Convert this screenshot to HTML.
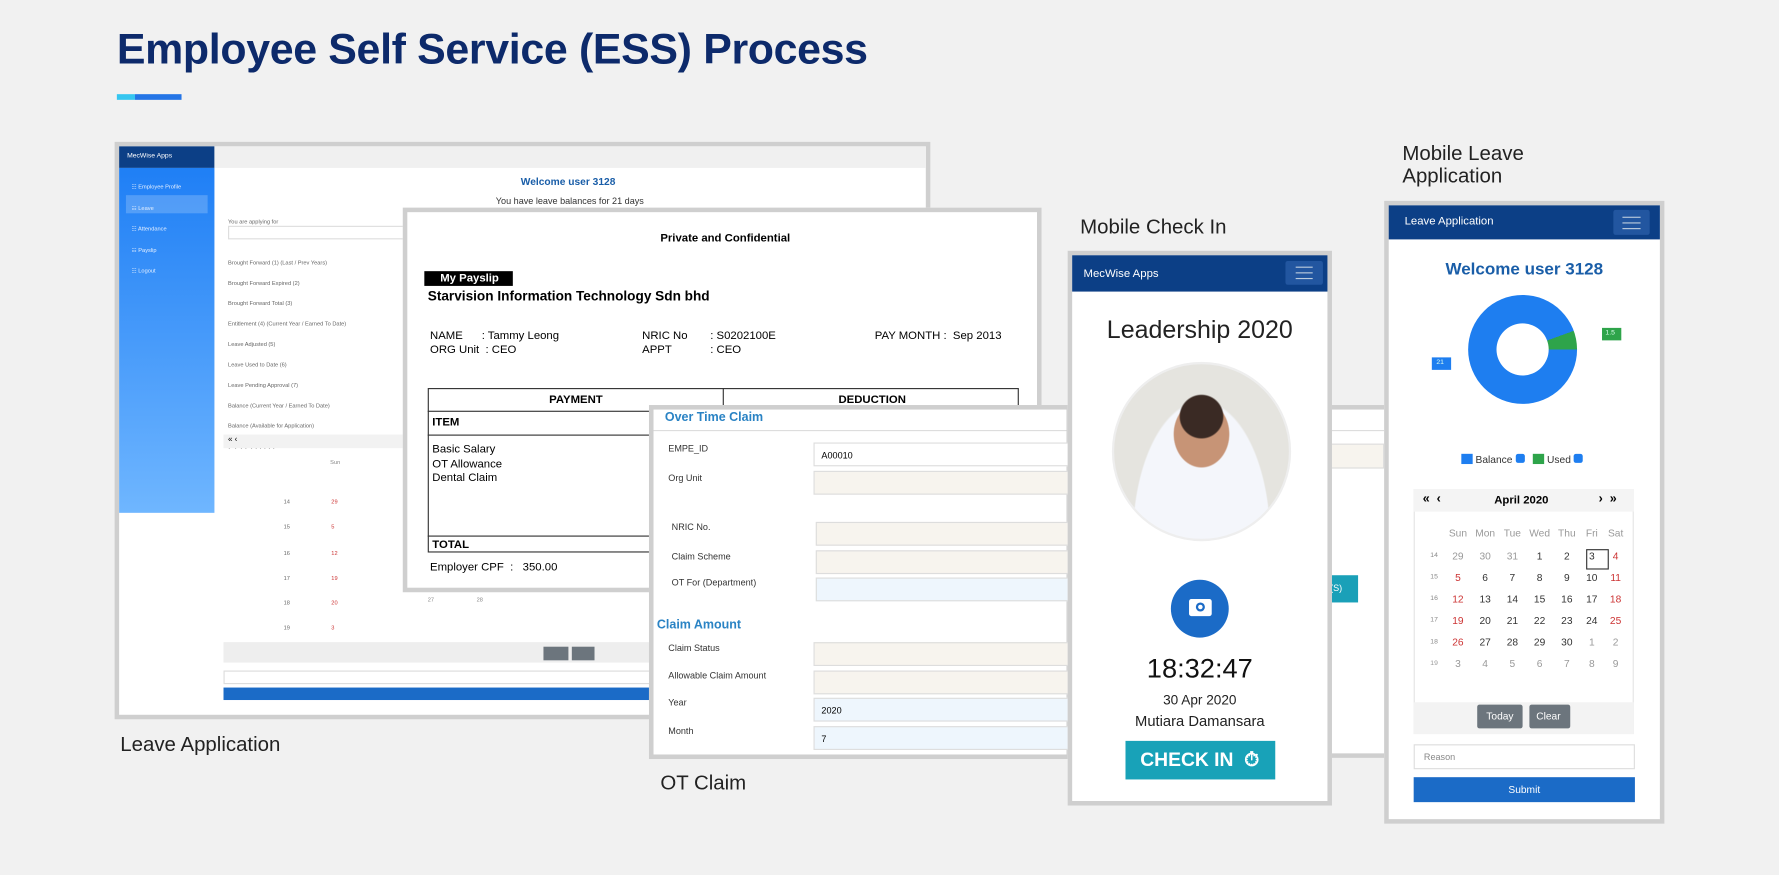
<!DOCTYPE html>
<html><head><meta charset="utf-8"><style>
*{box-sizing:border-box;margin:0;padding:0}
html,body{width:1779px;height:875px;overflow:hidden;background:#f1f1f1;font-family:"Liberation Sans",sans-serif}
#w{position:absolute;left:0;top:0;width:1568px;height:771px;transform:scale(1.13457);transform-origin:0 0}
.a{position:absolute}
.fr{position:absolute;border:4px solid #cfcfcf;background:#fff}
.lbl{position:absolute;font-size:18px;color:#222;line-height:21px}
.t{position:absolute;white-space:nowrap}
.inp{position:absolute;border:1px solid #ddd;background:#f7f4ee}
.inpb{position:absolute;border:1px solid #ddd;background:#eef6fd}
</style></head><body><div id="w">
<div class="t" style="left:103px;top:23px;font-size:37.8px;font-weight:bold;color:#0d2a6b;letter-spacing:-0.3px">Employee Self Service (ESS) Process</div>
<div class="a" style="left:103px;top:83px;width:16px;height:5px;background:#36c6f0"></div>
<div class="a" style="left:119px;top:83px;width:41px;height:5px;background:#2475e6"></div>

<!-- Leave application desktop -->
<div class="fr" style="left:101px;top:125px;width:719px;height:509px">
 <div class="a" style="left:0;top:0;width:84px;height:19px;background:#0c3f86;color:#fff;font-size:6px;padding:6px 7px">MecWise Apps</div>
 <div class="a" style="left:84px;top:0;right:0;height:19px;background:#f0f0f0"></div>
 <div class="a" style="left:0;top:19px;width:84px;height:304px;background:linear-gradient(#1f7ff5,#6fb6ff)"></div>
 <div class="a" style="left:6px;top:43px;width:72px;height:16px;background:rgba(255,255,255,.2)"></div>
 <div class="t" style="left:11px;top:27px;font-size:5px;color:#e6f0ff;line-height:18.5px">☷ Employee Profile<br>☷ Leave<br>☷ Attendance<br>☷ Payslip<br>☷ Logout</div>
 <div class="t" style="left:354px;top:26px;font-size:9px;font-weight:bold;color:#1a5ea8">Welcome user 3128</div>
 <div class="t" style="left:332px;top:44px;font-size:8px;color:#333">You have leave balances for 21 days</div>
 <div class="t" style="left:96px;top:58px;font-size:5px;color:#666;line-height:18px">You are applying for<br><br>Brought Forward (1) (Last / Prev Years)<br>Brought Forward Expired (2)<br>Brought Forward Total (3)<br>Entitlement (4) (Current Year / Earned To Date)<br>Leave Adjusted (5)<br>Leave Used to Date (6)<br>Leave Pending Approval (7)<br>Balance (Current Year / Earned To Date)<br>Balance (Available for Application)<br>(-3)+(4)+(5)-(6)-(7)</div>
 <div class="inp" style="left:96px;top:70px;width:160px;height:12px;background:#fff"></div>
 <div class="a" style="left:92px;top:254px;width:480px;height:12px;background:#f2f2f2"></div>
 <div class="t" style="left:96px;top:255px;font-size:7px">« ‹</div>
 <div class="t" style="left:186px;top:276px;font-size:5px;color:#888">Sun</div>
 <div class="t" style="left:145px;top:303px;font-size:5px;color:#666;line-height:22.3px">14<br>15<br>16<br>17<br>18<br>19</div>
 <div class="t" style="left:187px;top:303px;font-size:5px;color:#c33;line-height:22.3px">29<br>5<br>12<br>19<br>20<br>3</div>
 <div class="a" style="left:92px;top:437px;width:480px;height:18px;background:#eee"></div>
 <div class="a" style="left:374px;top:441px;width:22px;height:12px;background:#6c757d"></div>
 <div class="a" style="left:399px;top:441px;width:20px;height:12px;background:#6c757d"></div>
 <div class="inp" style="left:92px;top:462px;width:480px;height:12px;background:#fff"></div>
 <div class="a" style="left:92px;top:477px;width:480px;height:11px;background:#1b6bc7"></div>
</div>

<!-- behind panel -->
<div class="fr" style="left:940px;top:357px;width:284px;height:311px">
 <div class="a" style="left:0;top:18px;right:0;height:1px;background:#ddd"></div>
 <div class="inp" style="left:0;top:30px;right:0;height:22px"></div>
 <div class="a" style="left:221px;top:146px;width:32px;height:24px;background:#1aa0b8;color:#fff;font-size:8px;padding:7px 2px">E(S)</div>
</div>

<!-- Payslip -->
<div class="fr" style="left:355px;top:183px;width:563px;height:339px">
 <div class="t" style="left:223px;top:18px;font-size:10px;font-weight:bold">Private and Confidential</div>
 <div class="a" style="left:15px;top:52px;width:78px;height:13px;background:#000;color:#fff;font-size:10px;font-weight:bold;padding:1px 0 0 14px">My Payslip</div>
 <div class="t" style="left:18px;top:67px;font-size:12px;font-weight:bold">Starvision Information Technology Sdn bhd</div>
 <div class="t" style="left:20px;top:104px;font-size:10px;line-height:12px">NAME&nbsp;&nbsp;&nbsp;&nbsp;&nbsp;&nbsp;: Tammy Leong<br>ORG Unit&nbsp; : CEO</div>
 <div class="t" style="left:207px;top:104px;font-size:10px;line-height:12px">NRIC No<br>APPT</div>
 <div class="t" style="left:267px;top:104px;font-size:10px;line-height:12px">: S0202100E<br>: CEO</div>
 <div class="t" style="left:412px;top:104px;font-size:10px">PAY MONTH :&nbsp; Sep 2013</div>
 <div class="a" style="left:18px;top:155px;width:521px;height:145px;border:1px solid #333"></div>
 <div class="a" style="left:278px;top:155px;width:1px;height:20px;background:#333"></div>
 <div class="a" style="left:18px;top:175px;width:521px;height:1px;background:#333"></div>
 <div class="a" style="left:18px;top:196px;width:521px;height:1px;background:#333"></div>
 <div class="a" style="left:18px;top:285px;width:521px;height:1px;background:#333"></div>
 <div class="t" style="left:125px;top:160px;font-size:10px;font-weight:bold">PAYMENT</div>
 <div class="t" style="left:380px;top:160px;font-size:10px;font-weight:bold">DEDUCTION</div>
 <div class="t" style="left:22px;top:180px;font-size:10px;font-weight:bold">ITEM</div>
 <div class="t" style="left:22px;top:204px;font-size:10px;line-height:12.5px">Basic Salary<br>OT Allowance<br>Dental Claim</div>
 <div class="t" style="left:22px;top:288px;font-size:10px;font-weight:bold">TOTAL</div>
 <div class="t" style="left:20px;top:308px;font-size:10px">Employer CPF&nbsp; :&nbsp;&nbsp; 350.00</div>
 <div class="t" style="left:18px;top:331px;font-size:5px;color:#888;line-height:22px">27&nbsp;&nbsp;&nbsp;&nbsp;&nbsp;&nbsp;&nbsp;&nbsp;&nbsp;&nbsp;&nbsp;&nbsp;&nbsp;&nbsp;&nbsp;&nbsp;&nbsp;&nbsp;&nbsp;&nbsp;&nbsp;&nbsp;&nbsp;&nbsp;&nbsp;&nbsp;&nbsp;28</div>
</div>

<!-- OT claim -->
<div class="fr" style="left:572px;top:357px;width:372px;height:312px">
 <div class="t" style="left:10px;top:1px;font-size:11px;font-weight:bold;color:#2a83c4">Over Time Claim</div>
 <div class="a" style="left:0;top:18px;right:0;height:1px;background:#ddd"></div>
 <div class="t" style="left:13px;top:30px;font-size:8px;color:#333">EMPE_ID</div>
 <div class="inp" style="left:141px;top:29px;width:230px;height:21px;background:#fff;font-size:8px;padding:6px">A00010</div>
 <div class="t" style="left:13px;top:56px;font-size:8px;color:#333">Org Unit</div>
 <div class="inp" style="left:141px;top:54px;width:230px;height:21px"></div>
 <div class="t" style="left:16px;top:99px;font-size:8px;color:#333">NRIC No.</div>
 <div class="inp" style="left:143px;top:99px;width:230px;height:21px"></div>
 <div class="t" style="left:16px;top:125px;font-size:8px;color:#333">Claim Scheme</div>
 <div class="inp" style="left:143px;top:124px;width:230px;height:21px"></div>
 <div class="t" style="left:16px;top:148px;font-size:8px;color:#333">OT For (Department)</div>
 <div class="inpb" style="left:143px;top:148px;width:230px;height:21px"></div>
 <div class="t" style="left:3px;top:184px;font-size:11px;font-weight:bold;color:#2a83c4">Claim Amount</div>
 <div class="t" style="left:13px;top:206px;font-size:8px;color:#333">Claim Status</div>
 <div class="inp" style="left:141px;top:205px;width:230px;height:21px"></div>
 <div class="t" style="left:13px;top:230px;font-size:8px;color:#333">Allowable Claim Amount</div>
 <div class="inp" style="left:141px;top:230px;width:230px;height:21px"></div>
 <div class="t" style="left:13px;top:254px;font-size:8px;color:#333">Year</div>
 <div class="inpb" style="left:141px;top:254px;width:230px;height:21px;font-size:8px;padding:6px">2020</div>
 <div class="t" style="left:13px;top:279px;font-size:8px;color:#333">Month</div>
 <div class="inpb" style="left:141px;top:279px;width:230px;height:21px;font-size:8px;padding:6px">7</div>
</div>

<!-- Mobile check in -->
<div class="fr" style="left:941px;top:221px;width:233px;height:489px">
 <div class="a" style="left:0;top:0;right:0;height:32px;background:#0c3f86"></div>
 <div class="t" style="left:10px;top:11px;font-size:10px;color:#fff">MecWise Apps</div>
 <div class="a" style="left:188px;top:5px;width:33px;height:21px;background:#2256a0;border-radius:2px"></div>
 <div class="a" style="left:197px;top:10px;width:15px;height:11px;border-top:1.5px solid #bcd;border-bottom:1.5px solid #bcd"><div class="a" style="left:0;top:3.5px;width:15px;height:1.5px;background:#bcd"></div></div>
 <div class="t" style="left:0;width:225px;top:53px;text-align:center;font-size:22px;color:#222">Leadership 2020</div>
 <div class="a" style="left:35px;top:94px;width:158px;height:158px;border-radius:50%;background:radial-gradient(circle at 50% 30%,#3a2a24 0 14%,transparent 15%),radial-gradient(ellipse at 50% 40%,#c79476 0 22%,transparent 23%),radial-gradient(ellipse at 50% 100%,#f4f6fb 0 55%,transparent 56%),#e5e4df;border:2px solid #eee"></div>
 <div class="a" style="left:87px;top:286px;width:51px;height:51px;border-radius:50%;background:#1b6bc7"></div>
 <div class="a" style="left:103px;top:303px;width:20px;height:15px;background:#fff;border-radius:2px"><div class="a" style="left:6px;top:3px;width:8px;height:8px;border-radius:50%;border:2px solid #1b6bc7"></div></div>
 <div class="t" style="left:0;width:225px;top:351px;text-align:center;font-size:24px;color:#111">18:32:47</div>
 <div class="t" style="left:0;width:225px;top:385px;text-align:center;font-size:12px;color:#222">30 Apr 2020</div>
 <div class="t" style="left:0;width:225px;top:403px;text-align:center;font-size:13px;color:#222">Mutiara Damansara</div>
 <div class="a" style="left:47px;top:428px;width:132px;height:34px;background:#18a2b8;color:#fff;font-size:17px;font-weight:bold;padding:7px 0 0 13px">CHECK IN&nbsp; ⏱</div>
</div>

<!-- Mobile leave -->
<div class="fr" style="left:1220px;top:177px;width:247px;height:549px">
 <div class="a" style="left:0;top:0;right:0;height:30px;background:#0c3f86"></div>
 <div class="t" style="left:14px;top:9px;font-size:10px;color:#fff">Leave Application</div>
 <div class="a" style="left:198px;top:4px;width:32px;height:22px;background:#2256a0;border-radius:2px"></div>
 <div class="a" style="left:206px;top:10px;width:16px;height:11px;border-top:1.5px solid #bcd;border-bottom:1.5px solid #bcd"><div class="a" style="left:0;top:3.5px;width:16px;height:1.5px;background:#bcd"></div></div>
 <div class="t" style="left:0;width:239px;top:48px;text-align:center;font-size:15px;font-weight:bold;color:#1a5ea8">Welcome user 3128</div>
 <div class="a" style="left:70px;top:79px;width:96px;height:96px;border-radius:50%;background:conic-gradient(#1e7ef0 0 70deg,#2ea44a 70deg 90deg,#1e7ef0 90deg)"></div>
 <div class="a" style="left:95px;top:104px;width:46px;height:46px;border-radius:50%;background:#fff"></div>
 <div class="a" style="left:188px;top:108px;width:17px;height:11px;background:#2ea44a;color:#dfe;font-size:6px;padding:2px 3px">1.5</div>
 <div class="a" style="left:38px;top:134px;width:17px;height:11px;background:#1e7ef0;color:#dfe;font-size:6px;padding:2px 4px">21</div>
 <div class="t" style="left:64px;top:219px;font-size:9px;color:#333"><span style="display:inline-block;width:10px;height:9px;background:#1e7ef0;vertical-align:-1px"></span> Balance <span style="display:inline-block;width:8px;height:8px;background:#1e7ef0;border-radius:2px"></span>&nbsp;&nbsp; <span style="display:inline-block;width:10px;height:9px;background:#2ea44a;vertical-align:-1px"></span> Used <span style="display:inline-block;width:8px;height:8px;background:#1e7ef0;border-radius:2px"></span></div>
 <div class="a" style="left:22px;top:250px;width:194px;height:216px;border:1px solid #e4e4e4;background:#fff"></div>
 <div class="a" style="left:22px;top:250px;width:194px;height:20px;background:#f4f4f4"></div>
 <div class="t" style="left:30px;top:253px;font-size:11px;font-weight:bold">«&nbsp; ‹</div>
 <div class="t" style="left:93px;top:255px;font-size:10px;font-weight:bold">April 2020</div>
 <div class="t" style="left:185px;top:253px;font-size:11px;font-weight:bold">›&nbsp; »</div>
 <div class="a" style="left:22px;top:438px;width:194px;height:28px;background:#f3f3f3"></div>
 <div class="a" style="left:78px;top:440px;width:40px;height:21px;background:#6c757d;color:#fff;font-size:9px;padding:5px 8px;border-radius:2px">Today</div>
 <div class="a" style="left:124px;top:440px;width:36px;height:21px;background:#6c757d;color:#fff;font-size:9px;padding:5px 6px;border-radius:2px">Clear</div>
 <div class="a" style="left:174px;top:303px;width:20px;height:18px;border:1.5px solid #333"></div>
 <div class="inp" style="left:22px;top:475px;width:195px;height:22px;background:#fff;font-size:8px;color:#888;padding:6px 8px">Reason</div>
 <div class="a" style="left:22px;top:504px;width:195px;height:22px;background:#1b6bc7;color:#fff;font-size:9px;text-align:center;padding-top:6px">Submit</div>
</div>
<div class="a" style="left:1255px;top:460px;font-size:9px;color:#333">
<table style="border-collapse:collapse;font-family:'Liberation Sans',sans-serif;text-align:center">
<tr style="height:20px;color:#999"><td style="width:18px"></td><td style="width:24px">Sun</td><td style="width:24px">Mon</td><td style="width:24px">Tue</td><td style="width:24px">Wed</td><td style="width:24px">Thu</td><td style="width:20px">Fri</td><td style="width:22px">Sat</td></tr>
<tr style="height:19px"><td style="font-size:6px;color:#888">14</td><td style="color:#999">29</td><td style="color:#999">30</td><td style="color:#999">31</td><td>1</td><td>2</td><td>3</td><td style="color:#c33">4</td></tr>
<tr style="height:19px"><td style="font-size:6px;color:#888">15</td><td style="color:#c33">5</td><td>6</td><td>7</td><td>8</td><td>9</td><td>10</td><td style="color:#c33">11</td></tr>
<tr style="height:19px"><td style="font-size:6px;color:#888">16</td><td style="color:#c33">12</td><td>13</td><td>14</td><td>15</td><td>16</td><td>17</td><td style="color:#c33">18</td></tr>
<tr style="height:19px"><td style="font-size:6px;color:#888">17</td><td style="color:#c33">19</td><td>20</td><td>21</td><td>22</td><td>23</td><td>24</td><td style="color:#c33">25</td></tr>
<tr style="height:19px"><td style="font-size:6px;color:#888">18</td><td style="color:#c33">26</td><td>27</td><td>28</td><td>29</td><td>30</td><td style="color:#999">1</td><td style="color:#999">2</td></tr>
<tr style="height:19px;color:#999"><td style="font-size:6px">19</td><td>3</td><td>4</td><td>5</td><td>6</td><td>7</td><td>8</td><td>9</td></tr>
</table></div>

<div class="lbl" style="left:106px;top:646px">Leave Application</div>
<div class="lbl" style="left:582px;top:680px">OT Claim</div>
<div class="lbl" style="left:952px;top:190px">Mobile Check In</div>
<div class="lbl" style="left:1236px;top:125px;line-height:20px">Mobile Leave<br>Application</div>
</div></body></html>
